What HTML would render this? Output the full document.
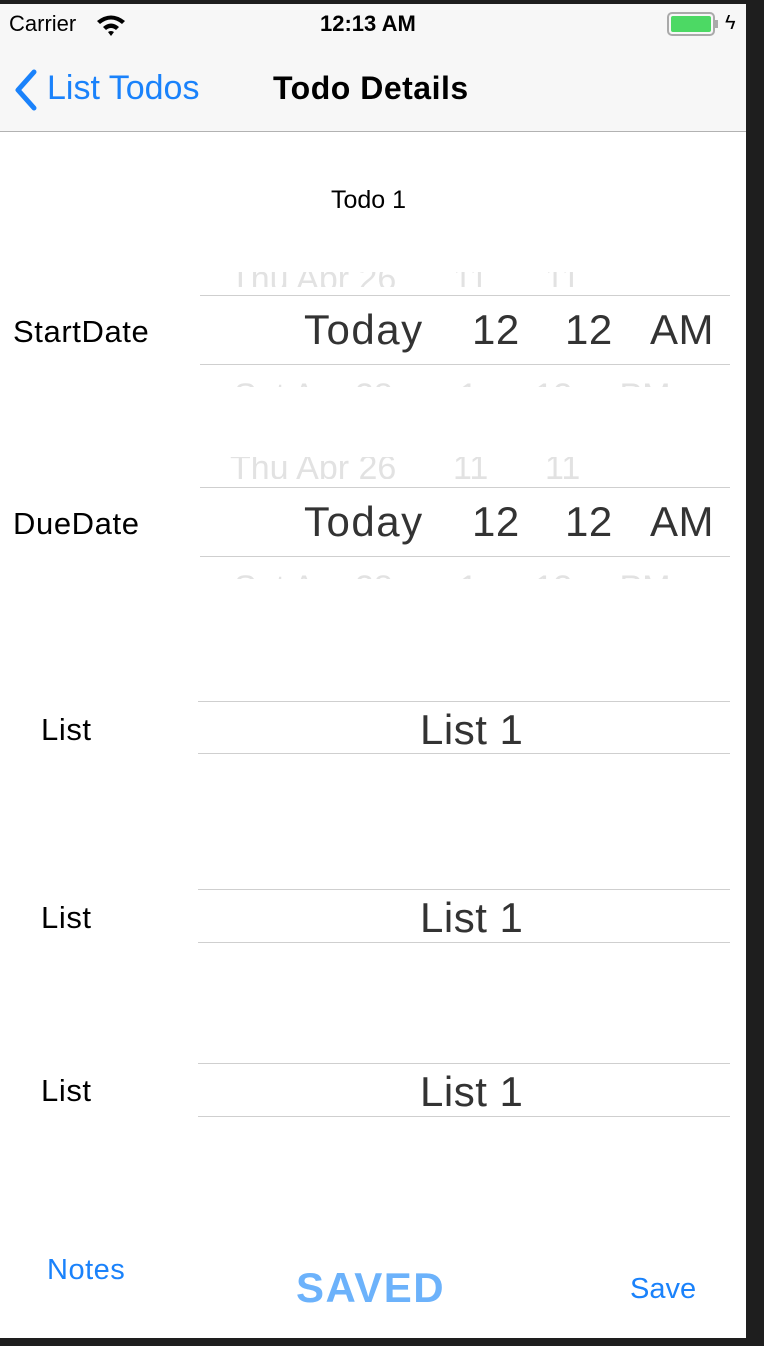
<!DOCTYPE html>
<html><head><meta charset="utf-8"><style>
*{margin:0;padding:0;box-sizing:border-box}
body{width:764px;height:1346px;background:#1e1e1e;position:relative;overflow:hidden;font-family:"Liberation Sans",sans-serif}
.scr{position:absolute;left:0;top:4px;width:746px;height:1334px;background:#fff;overflow:hidden}
.a{position:absolute;white-space:nowrap}
.line{position:absolute;height:1px;background:#cfcfcf}
.clip{position:absolute;overflow:hidden}
.big{font-size:42px;color:#333;letter-spacing:0.5px}
.fade{font-size:34px;color:#e2e2e2}
.blue{color:#1a82fb}
.lbl{font-size:31px;letter-spacing:0.6px}
</style></head><body>
<div class="scr">
 <div class="a" style="left:0;top:0;width:746px;height:128px;background:#f7f7f7;border-bottom:1px solid #b2b2b2"></div>
 <div class="a" style="left:9px;top:7px;font-size:22px">Carrier</div>
 <svg class="a" style="left:95px;top:9px" width="32" height="24" viewBox="0 0 32 24"><path d="M2 8Q16-3 30 8L27 11Q16 2 5 11Z M8 14Q16 7 24 14L21 17Q16 13 11 17Z M13 19Q16 17 19 19L16 23Z" fill="#000"/></svg>
 <div class="a" style="left:320px;top:7px;font-size:22px;font-weight:bold">12:13 AM</div>
 <div class="a" style="left:667px;top:8px;width:48px;height:24px;border:2px solid #aaa;border-radius:5px;padding:2px"><div style="width:100%;height:100%;background:#4cd964;border-radius:2px"></div></div>
 <div class="a" style="left:715px;top:16px;width:3px;height:8px;background:#aaa"></div>
 <div class="a" style="left:725px;top:8px;font-size:20px">ϟ</div>
 <svg class="a" style="left:12px;top:64px" width="26" height="44" viewBox="0 0 26 44"><path d="M22 4L6 22L22 40" stroke="#1a82fb" stroke-width="5" fill="none" stroke-linecap="round" stroke-linejoin="round"/></svg>
 <div class="a blue" style="left:47px;top:65px;font-size:34px">List Todos</div>
 <div class="a" style="left:273px;top:66px;font-size:32px;font-weight:bold;letter-spacing:0.5px">Todo Details</div>
 <div class="a" style="left:331px;top:182px;font-size:25px">Todo 1</div>

 <div class="a lbl" style="left:13px;top:310px">StartDate</div>
 <div class="clip" style="left:200px;top:268px;width:530px;height:15px"><div class="a fade" style="left:30px;top:-12px">Thu Apr 26&nbsp;&nbsp;&nbsp;&nbsp;&nbsp;&nbsp;11&nbsp;&nbsp;&nbsp;&nbsp;&nbsp;&nbsp;11</div></div>
 <div class="line" style="left:200px;top:291px;width:530px"></div>
 <div class="a big" style="left:304px;top:302px;letter-spacing:1.5px">Today</div><div class="a big" style="left:472px;top:302px">12</div><div class="a big" style="left:565px;top:302px">12</div><div class="a big" style="left:650px;top:302px">AM</div>
 <div class="line" style="left:200px;top:360px;width:530px"></div>
 <div class="clip" style="left:200px;top:373px;width:530px;height:10px"><div class="a fade" style="left:34px;top:0">Sat Apr 28&nbsp;&nbsp;&nbsp;&nbsp;&nbsp;&nbsp;&nbsp;1&nbsp;&nbsp;&nbsp;&nbsp;&nbsp;&nbsp;13&nbsp;&nbsp;&nbsp;&nbsp;&nbsp;PM</div></div>

 <div class="a lbl" style="left:13px;top:502px">DueDate</div>
 <div class="clip" style="left:200px;top:453px;width:530px;height:22px"><div class="a fade" style="left:30px;top:-8px">Thu Apr 26&nbsp;&nbsp;&nbsp;&nbsp;&nbsp;&nbsp;11&nbsp;&nbsp;&nbsp;&nbsp;&nbsp;&nbsp;11</div></div>
 <div class="line" style="left:200px;top:483px;width:530px"></div>
 <div class="a big" style="left:304px;top:494px;letter-spacing:1.5px">Today</div><div class="a big" style="left:472px;top:494px">12</div><div class="a big" style="left:565px;top:494px">12</div><div class="a big" style="left:650px;top:494px">AM</div>
 <div class="line" style="left:200px;top:552px;width:530px"></div>
 <div class="clip" style="left:200px;top:565px;width:530px;height:10px"><div class="a fade" style="left:34px;top:0">Sat Apr 28&nbsp;&nbsp;&nbsp;&nbsp;&nbsp;&nbsp;&nbsp;1&nbsp;&nbsp;&nbsp;&nbsp;&nbsp;&nbsp;13&nbsp;&nbsp;&nbsp;&nbsp;&nbsp;PM</div></div>

 <div class="a lbl" style="left:41px;top:708px">List</div>
 <div class="line" style="left:198px;top:697px;width:532px"></div>
 <div class="a big" style="left:420px;top:702px">List 1</div>
 <div class="line" style="left:198px;top:749px;width:532px"></div>

 <div class="a lbl" style="left:41px;top:896px">List</div>
 <div class="line" style="left:198px;top:885px;width:532px"></div>
 <div class="a big" style="left:420px;top:890px">List 1</div>
 <div class="line" style="left:198px;top:938px;width:532px"></div>

 <div class="a lbl" style="left:41px;top:1069px">List</div>
 <div class="line" style="left:198px;top:1059px;width:532px"></div>
 <div class="a big" style="left:420px;top:1064px">List 1</div>
 <div class="line" style="left:198px;top:1112px;width:532px"></div>

 <div class="a blue" style="left:47px;top:1250px;font-size:29px;letter-spacing:0.5px">Notes</div>
 <div class="a" style="left:296px;top:1260px;font-size:42px;font-weight:bold;color:#6cb2fb;letter-spacing:1.5px">SAVED</div>
 <div class="a blue" style="left:630px;top:1269px;font-size:29px">Save</div>
</div>
</body></html>
